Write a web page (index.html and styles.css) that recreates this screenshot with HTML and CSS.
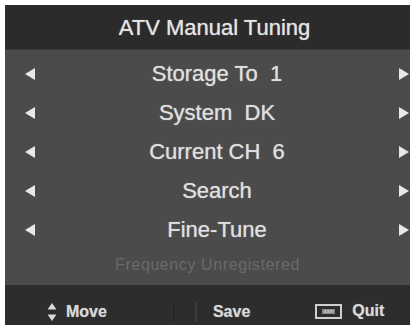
FILE: index.html
```html
<!DOCTYPE html>
<html>
<head>
<meta charset="utf-8">
<link rel="stylesheet" href="styles.css">
</head>
<body>
<div class="panel">
  <div class="header">ATV Manual Tuning</div>
  <div class="menu">
    <div class="row"><span class="arr left"></span><span class="label">Storage To&nbsp; 1</span><span class="arr right"></span></div>
    <div class="row"><span class="arr left"></span><span class="label">System&nbsp; DK</span><span class="arr right"></span></div>
    <div class="row"><span class="arr left"></span><span class="label">Current CH&nbsp; 6</span><span class="arr right"></span></div>
    <div class="row"><span class="arr left"></span><span class="label">Search</span><span class="arr right"></span></div>
    <div class="row"><span class="arr left"></span><span class="label">Fine-Tune</span><span class="arr right"></span></div>
    <div class="freq">Frequency Unregistered</div>
  </div>
  <div class="footer">
    <div class="item move">
      <svg class="updown" width="10" height="20" viewBox="0 0 10 20"><path d="M5 1 L9.5 7.5 H0.5 Z" fill="#d8d8d8"/><path d="M5 19 L9.5 12.5 H0.5 Z" fill="#d8d8d8"/></svg>
      <span>Move</span>
    </div>
    <div class="item save">
      <span class="okbox"></span>
      <span>Save</span>
    </div>
    <div class="item quit">
      <span class="exitkey"><span>EXIT</span></span>
      <span>Quit</span>
    </div>
  </div>
</div>
</body>
</html>
```
FILE: styles.css
```css
html, body {
  margin: 0;
  padding: 0;
  background: #ffffff;
}
body {
  font-family: "Liberation Sans", Arial, sans-serif;
}
.panel {
  margin: 5px 0 0 5px;
  width: 405px;
  height: 320px;
  display: flex;
  flex-direction: column;
  background: #4a4a4a;
  overflow: hidden;
}
.header {
  height: 45px;
  background: #2b2b2b;
  color: #e4e4e4;
  font-size: 22px;
  text-shadow: 0 0 1px #bbbbbb;
  display: flex;
  align-items: center;
  justify-content: center;
  padding: 1px 0 0 14px;
  box-sizing: border-box;
  border-bottom: 1px solid #3a3a3a;
}
.menu {
  height: 235px;
  padding-top: 4px;
  box-sizing: border-box;
  background: #4b4b4b;
}
.row {
  height: 39px;
  display: flex;
  align-items: center;
  justify-content: space-between;
  padding: 0 1px 0 20px;
  color: #e0e0e0;
  font-size: 22px;
  text-shadow: 0 0 1px #b5b5b5;
}
.label {
  flex: 1;
  text-align: center;
}
.arr {
  width: 0;
  height: 0;
  border-top: 6px solid transparent;
  border-bottom: 6px solid transparent;
}
.arr.left {
  border-right: 10px solid #e8e8e8;
}
.arr.right {
  border-left: 10px solid #e8e8e8;
}
.freq {
  height: 31px;
  display: flex;
  align-items: center;
  justify-content: center;
  color: #6a6a6a;
  font-size: 16px;
  letter-spacing: 0.6px;
}
.footer {
  flex: 1;
  background: #2d2d2d;
  display: flex;
  align-items: flex-start;
  padding-top: 17px;
  box-sizing: border-box;
  color: #d8d8d8;
  font-size: 16px;
  font-weight: bold;
  text-shadow: 0 0 1px #999999;
}
.item {
  display: flex;
  align-items: center;
}
.move {
  margin-left: 42px;
  gap: 9px;
}
.save {
  margin-left: 66px;
  gap: 16px;
}
.okbox {
  width: 24px;
  height: 20px;
  border-left: 2px solid #262626;
  border-right: 2px solid #3b3b3b;
  box-sizing: border-box;
}
.quit {
  margin-left: 65px;
  gap: 10px;
}
.exitkey {
  width: 27px;
  height: 15px;
  border: 2px solid #cfcfcf;
  box-sizing: border-box;
  display: flex;
  align-items: center;
  justify-content: center;
}
.exitkey span {
  font-size: 4px;
  color: #cfcfcf;
  background: #8a8a8a;
  padding: 0 2px;
  line-height: 5px;
  text-shadow: none;
}
```
